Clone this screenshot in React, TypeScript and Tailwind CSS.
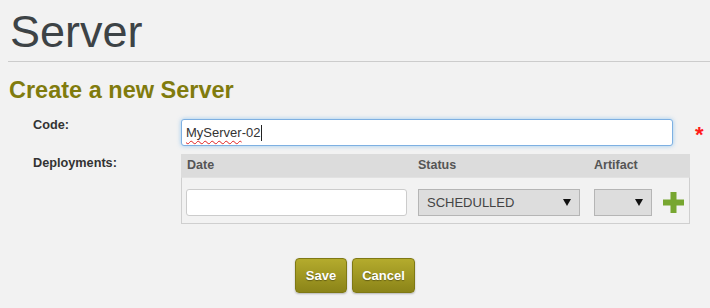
import React from "react";

function Caret() {
  return (
    <svg width="8" height="7" viewBox="0 0 8 7" className="shrink-0">
      <path d="M0 0 L8 0 L4 7 Z" fill="#111" />
    </svg>
  );
}

function Plus() {
  return (
    <svg width="21" height="21" viewBox="0 0 21 21">
      <rect x="7.5" y="0" width="6" height="21" fill="#77a630" />
      <rect x="0" y="7.5" width="21" height="6" fill="#77a630" />
    </svg>
  );
}

export default function App() {
  return (
    <div
      className="w-[710px] h-[308px] bg-[#f2f2f2] overflow-hidden"
      style={{ fontFamily: '"Liberation Sans", Arial, sans-serif' }}
    >
      <div className="pl-[8px]">
        <h1 className="mt-[6px] pl-[2px] pb-[3px] text-[45px] leading-[52px] text-[#3d4346] border-b border-[#cccccc]">
          Server
        </h1>
        <h2 className="mt-[14px] pl-[1px] text-[23.5px] leading-[28px] font-bold text-[#807b0d]">
          Create a new Server
        </h2>
      </div>

      <div className="mt-[13px] grid grid-cols-[148px_1fr] pl-[33px]">
        {/* Code row */}
        <div className="text-[12.7px] leading-[16px] font-bold text-[#333]">Code:</div>
        <div className="flex items-center">
          <div className="mt-[2px] w-[492px] h-[27px] bg-white border border-[#7eb0e2] rounded-[3px] shadow-[0_0_4px_rgba(82,168,236,0.55)] flex items-center pl-[4px] text-[13px] text-[#333]">
            <span className="underline decoration-wavy decoration-[#e02020] decoration-[1px] underline-offset-[3px]">
              MyServer
            </span>
            <span>-02</span>
            <span className="ml-[1px] w-px h-[16px] bg-[#222]" />
          </div>
          <span className="ml-[22px] mt-[6px] text-[22px] leading-[22px] font-bold text-[#ff1a1a]">*</span>
        </div>

        {/* Deployments row */}
        <div className="mt-[9px] text-[12.7px] leading-[16px] font-bold text-[#333]">Deployments:</div>
        <div className="mt-[8px] w-[509px]">
          <div className="h-[23px] bg-[#dcdcdc] flex items-center text-[12.5px] font-bold text-[#555]">
            <div className="w-[231px] pl-[6px]">Date</div>
            <div className="w-[176px] pl-[6px]">Status</div>
            <div className="pl-[6px]">Artifact</div>
          </div>
          <div className="border-x border-b border-t border-[#cfcfcf] border-t-[#e2e2e2] pt-[11px] pb-[7px] flex items-center">
            <div className="w-[230px] pl-[4px]">
              <div className="w-[221px] h-[27px] bg-white border border-[#cccccc] rounded-[3px]" />
            </div>
            <div className="w-[176px] pl-[6px]">
              <div className="w-[162px] h-[27px] bg-[#dddddd] border border-[#b5b5b5] flex items-center justify-between pl-[8px] pr-[8px] text-[13px] text-[#444]">
                <span>SCHEDULLED</span>
                <Caret />
              </div>
            </div>
            <div className="pl-[6px] flex items-center">
              <div className="w-[58px] h-[27px] bg-[#dddddd] border border-[#b5b5b5] flex items-center justify-end pr-[8px]">
                <Caret />
              </div>
              <div className="ml-[11px] flex items-center">
                <Plus />
              </div>
            </div>
          </div>
        </div>
      </div>

      <div className="mt-[34px] flex justify-center gap-[5px]">
        <button className="w-[52px] h-[35px] rounded-[4px] border border-[#7f7914] bg-gradient-to-b from-[#b4ab2d] to-[#8b8418] text-white text-[13px] font-bold [text-shadow:0_1px_1px_rgba(0,0,0,0.35)] shadow-[0_1px_2px_rgba(0,0,0,0.25)]">
          Save
        </button>
        <button className="w-[63px] h-[35px] rounded-[4px] border border-[#7f7914] bg-gradient-to-b from-[#b4ab2d] to-[#8b8418] text-white text-[13px] font-bold [text-shadow:0_1px_1px_rgba(0,0,0,0.35)] shadow-[0_1px_2px_rgba(0,0,0,0.25)]">
          Cancel
        </button>
      </div>
    </div>
  );
}
